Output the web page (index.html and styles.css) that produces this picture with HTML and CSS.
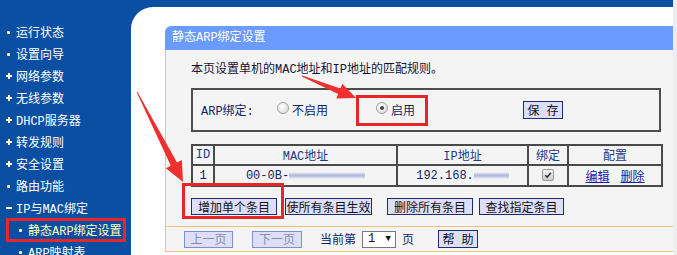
FILE: index.html
```html
<!DOCTYPE html>
<html lang="zh-CN">
<head>
<meta charset="utf-8">
<title>静态ARP绑定设置</title>
<link rel="stylesheet" href="styles.css">
</head>
<body>
<div class="page">
  <nav class="sidebar">
    <ul class="nav">
      <li class="nav-item"><span class="bullet"><i class="dot"></i></span>运行状态</li>
      <li class="nav-item"><span class="bullet"><i class="dot"></i></span>设置向导</li>
      <li class="nav-item"><span class="bullet"><i class="plus"></i></span>网络参数</li>
      <li class="nav-item"><span class="bullet"><i class="plus"></i></span>无线参数</li>
      <li class="nav-item"><span class="bullet"><i class="plus"></i></span>DHCP服务器</li>
      <li class="nav-item"><span class="bullet"><i class="plus"></i></span>转发规则</li>
      <li class="nav-item"><span class="bullet"><i class="plus"></i></span>安全设置</li>
      <li class="nav-item"><span class="bullet"><i class="dot"></i></span>路由功能</li>
      <li class="nav-item"><span class="bullet"><i class="minus"></i></span>IP与MAC绑定</li>
      <li class="nav-item sub active"><span class="bullet"><i class="dot"></i></span>静态ARP绑定设置</li>
      <li class="nav-item sub"><span class="bullet"><i class="dot"></i></span>ARP映射表</li>
    </ul>
  </nav>
  <main class="main">
    <section class="panel">
      <div class="panel-head">静态ARP绑定设置</div>
      <div class="panel-body">
        <div class="content">
          <p class="desc">本页设置单机的MAC地址和IP地址的匹配规则。</p>
          <div class="arp-box">
            <span class="arp-label">ARP绑定:</span>
            <span class="opt opt-off"><span class="radio"></span>不启用</span>
            <span class="opt opt-on"><span class="radio checked"></span>启用</span>
            <span class="btn btn-save">保 存</span>
          </div>
          <table class="grid">
            <colgroup>
              <col class="c-id"><col class="c-mac"><col class="c-ip"><col class="c-bind"><col class="c-cfg">
            </colgroup>
            <tr class="head-row">
              <th>ID</th><th>MAC地址</th><th>IP地址</th><th>绑定</th><th>配置</th>
            </tr>
            <tr class="data-row">
              <td>1</td>
              <td>00-0B-<span class="blur blur-mac"></span></td>
              <td>192.168.<span class="blur blur-ip"></span></td>
              <td><span class="check"><svg viewBox="0 0 12 12" width="12" height="12"><path d="M2.8 6.2 L5 8.6 L9.4 3.2" fill="none" stroke="#2b2b2b" stroke-width="1.8"/></svg></span></td>
              <td><a class="link">编辑</a><a class="link link-del">删除</a></td>
            </tr>
          </table>
          <div class="actions">
            <span class="btn btn-add">增加单个条目</span>
            <span class="btn btn-apply">使所有条目生效</span>
            <span class="btn btn-delall">删除所有条目</span>
            <span class="btn btn-find">查找指定条目</span>
          </div>
        </div>
        <div class="footer">
          <span class="btn btn-page off">上一页</span>
          <span class="btn btn-page btn-next off">下一页</span>
          <span class="cur">当前第</span>
          <span class="select"><span>1</span><span class="caret">▼</span></span>
          <span class="pg">页</span>
          <span class="btn btn-help">帮 助</span>
        </div>
      </div>
    </section>
  </main>
</div>
<div class="side-strip"></div>
<svg class="overlay" width="677" height="255" viewBox="0 0 677 255">
  <g fill="none" stroke="#E8262A" stroke-width="3">
    <rect x="7.5" y="219.5" width="117" height="21"/>
    <rect x="357.5" y="96.5" width="69" height="28"/>
    <rect x="183.5" y="184.5" width="99" height="33"/>
  </g>
  <g fill="#F0302F">
    <polygon points="302.2,75.5 340.4,88.4 342.3,83.8 356,98 336.3,98.6 338.2,94.0 301.8,76.5"/>
    <polygon points="137.4,91.8 177.0,162.6 181.9,160.1 183,182 165.9,168.3 170.8,165.8 136.6,92.2"/>
  </g>
</svg>
</body>
</html>
```
FILE: styles.css
```css
* { box-sizing: border-box; }
html, body { margin: 0; padding: 0; }
body {
  width: 677px;
  height: 255px;
  overflow: hidden;
  position: relative;
  display: flex;
  background: #f0f0f0;
  font-family: "Liberation Mono", "Noto Sans CJK SC", monospace;
  font-size: 12px;
}
.page {
  width: 673px;
  height: 255px;
  display: flex;
  background: #0B4FA3;
}
.side-strip { flex: 1; background: #eeeeee; }

/* sidebar */
.sidebar { width: 131px; padding-top: 21px; }
.nav { list-style: none; margin: 0; padding: 0; }
.nav-item {
  height: 22px;
  display: flex;
  align-items: center;
  padding-left: 5px;
  color: #ffffff;
  white-space: nowrap;
}
.nav-item.sub { padding-left: 17px; }
.nav-item.active { color: #FFFFB4; }
.bullet {
  width: 7px;
  height: 7px;
  margin-right: 4px;
  display: flex;
  align-items: center;
  justify-content: center;
}
.dot { display: block; width: 3px; height: 3px; background: #FFFFC8; border-radius: 1px; }
.plus {
  display: block; width: 6px; height: 6px;
  background:
    linear-gradient(#FFFFC0, #FFFFC0) center / 6px 2px no-repeat,
    linear-gradient(#FFFFC0, #FFFFC0) center / 2px 6px no-repeat;
}
.minus { display: block; width: 6px; height: 2px; background: #FFFFC0; }

/* main */
.main {
  flex: 1;
  margin-top: 7px;
  background: #ffffff;
  border-top-left-radius: 22px;
  padding: 19px 0 0 34px;
  overflow: hidden;
}
.panel-head {
  height: 24px;
  line-height: 24px;
  background: #6A9BFF;
  color: #ffffff;
  padding-left: 7px;
  border-top-left-radius: 6px;
  font-size: 12px;
}
.panel-body {
  background: #F4F4F4;
  border-left: 1px solid #EFC27E;
  border-bottom: 1px solid #EFC27E;
}
.content { padding: 10px 0 11px 25px; }
.desc {
  margin: 0;
  height: 20px;
  line-height: 20px;
  color: #101436;
}
.arp-box {
  margin-top: 8px;
  width: 470px;
  height: 44px;
  border: 2px solid #4d4d4d;
  display: flex;
  align-items: center;
  padding-left: 8px;
  color: #132466;
}
.arp-label { width: 76px; }
.opt { display: flex; align-items: center; }
.opt-off { width: 99px; }
.opt-on { width: 147px; }
.radio {
  width: 12px; height: 12px;
  border-radius: 50%;
  border: 1px solid #a0a0a0;
  background: radial-gradient(circle at 40% 35%, #ffffff, #d4d4d4);
  margin-right: 3px;
  margin-top: -4px;
  position: relative;
}
.radio.checked::after {
  content: "";
  position: absolute;
  left: 3px; top: 3px;
  width: 4px; height: 4px;
  border-radius: 50%;
  background: #444;
}
.btn {
  display: inline-flex;
  align-items: center;
  justify-content: center;
  height: 17px;
  border: 1px solid #1D2F6F;
  background: #DEDEF8;
  color: #111;
  white-space: nowrap;
}
.btn-save { width: 40px; height: 18px; }

/* table */
.grid {
  margin-top: 12px;
  width: 470px;
  border-collapse: collapse;
  table-layout: fixed;
  color: #1E3A8A;
}
.c-id { width: 22px; }
.c-mac { width: 183px; }
.c-ip { width: 131px; }
.c-bind { width: 40px; }
.c-cfg { width: 94px; }
.grid th, .grid td {
  border: 2px solid #4a4a4a;
  padding: 0;
  text-align: center;
  font-weight: normal;
  white-space: nowrap;
}
.head-row { height: 20px; }
.data-row { height: 21px; color: #15246A; }
.blur {
  display: inline-block;
  height: 7px;
  vertical-align: middle;
  background: linear-gradient(to bottom, rgba(190,198,228,0), #AEB8DE 45%, #C4CBE6 70%, rgba(200,206,232,0));
  filter: blur(0.6px);
}
.blur-mac { width: 76px; }
.blur-ip { width: 35px; }
.check {
  display: inline-block;
  width: 12px; height: 12px;
  border: 1px solid #9a9a9a;
  border-radius: 2px;
  background: linear-gradient(#f4f4f4, #cdcdcd);
  vertical-align: middle;
  line-height: 0;
}
.check svg { display: block; width: 10px; height: 10px; }
.link { color: #1A1AB0; text-decoration: underline; }
.link-del { margin-left: 11px; }

/* actions */
.actions { margin-top: 11px; display: flex; }
.btn-add { width: 86px; }
.btn-apply { width: 87px; margin-left: 8px; }
.btn-delall { width: 86px; margin-left: 15px; }
.btn-find { width: 85px; margin-left: 6px; }

/* footer */
.footer {
  border-top: 1px solid #EFC27E;
  padding: 3px 0 3px 18px;
  height: 25px;
  display: flex;
  align-items: center;
  color: #132466;
}
.btn.off { color: #8A8FA8; border-color: #7F90C6; }
.btn-page { width: 49px; }
.btn-next { margin-left: 19px; width: 50px; }
.cur { margin-left: 18px; }
.select {
  margin-left: 6px;
  width: 34px;
  height: 17px;
  background: #fff;
  border: 1px solid #7a7a7a;
  display: flex;
  align-items: center;
  justify-content: space-between;
  padding: 0 4px 0 5px;
  color: #111;
}
.caret { font-size: 9px; }
.pg { margin-left: 6px; }
.btn-help { margin-left: 24px; width: 40px; height: 18px; }

.overlay {
  position: absolute;
  left: 0; top: 0;
  pointer-events: none;
}
```
